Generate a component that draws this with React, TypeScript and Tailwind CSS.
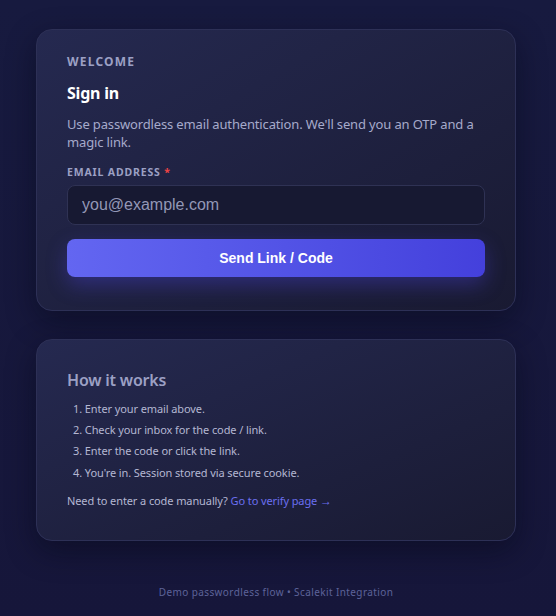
export default function App() {
  return (
    <div
      className="min-h-[616px] w-full bg-gradient-to-b from-[#171a3f] to-[#16163a] pr-[4px] pt-[29px] pb-[16px] text-[#c3c6de]"
      style={{ fontFamily: '"Noto Sans", "Open Sans", sans-serif' }}
    >
      <div className="mx-auto flex w-[480px] flex-col">
        <section className="rounded-[16px] border border-[#2d3056] bg-gradient-to-br from-[#252950] to-[#191a32] px-[30px] pt-[24px] pb-[33px] shadow-[0_10px_30px_rgba(5,6,20,0.45)]">
          <p className="text-[12px] font-bold uppercase leading-[16px] tracking-[0.1em] text-[#9ca0c4]">
            Welcome
          </p>
          <h1 className="mt-[11px] text-[16px] font-bold leading-[24px] tracking-[-0.2px] text-white">Sign in</h1>
          <p className="mt-[10px] text-[13px] leading-[18px] tracking-[-0.15px] text-[#a6aacb]">
            Use passwordless email authentication. We'll send you an OTP and a magic link.
          </p>
          <label className="mt-[13px] block text-[10.5px] font-bold uppercase leading-[16px] tracking-[0.08em] text-[#9ca0c4]">
            Email address <span className="text-[#ef4444]">*</span>
          </label>
          <input
            type="email"
            placeholder="you@example.com"
            className="mt-[5px] h-[40px] w-full rounded-[8px] border border-[#2f3254] bg-[#171932] px-[14px] text-[16px] text-white outline-none placeholder:text-[#9397b6]"
            style={{ fontFamily: '"Liberation Sans", Arial, sans-serif' }}
          />
          <button
            className="mt-[14px] h-[38px] w-full rounded-[8px] bg-gradient-to-r from-[#6366f1] to-[#4440dc] text-[14px] font-bold text-white shadow-[0_8px_20px_rgba(79,70,229,0.35)]"
            style={{ fontFamily: '"Liberation Sans", Arial, sans-serif' }}
          >
            Send Link / Code
          </button>
        </section>

        <section className="mt-[28px] rounded-[16px] border border-[#2d3056] bg-gradient-to-br from-[#252950] to-[#191a32] px-[30px] pt-[28px] pb-[30px] shadow-[0_10px_30px_rgba(5,6,20,0.45)]">
          <h2 className="text-[16px] font-semibold leading-[24px] tracking-[-0.2px] text-[#9ca0c4]">How it works</h2>
          <ol className="mt-[6px] pl-[6px] text-[11px] leading-[21px] tracking-[-0.1px] text-[#b4b7d2]">
            <li>1. Enter your email above.</li>
            <li>2. Check your inbox for the code / link.</li>
            <li>3. Enter the code or click the link.</li>
            <li className="mt-[1px]">4. You're in. Session stored via secure cookie.</li>
          </ol>
          <p className="mt-[8px] text-[11px] leading-[19px] tracking-[-0.1px] text-[#b4b7d2]">
            Need to enter a code manually?{" "}
            <a href="#" className="text-[#6b6ff0]">
              Go to verify page <span className="text-[12px]">→</span>
            </a>
          </p>
        </section>

        <p className="mt-[44px] text-center text-[10px] leading-[14px] tracking-[0.04em] text-[#5d6399]">
          Demo passwordless flow • Scalekit Integration
        </p>
      </div>
    </div>
  );
}
